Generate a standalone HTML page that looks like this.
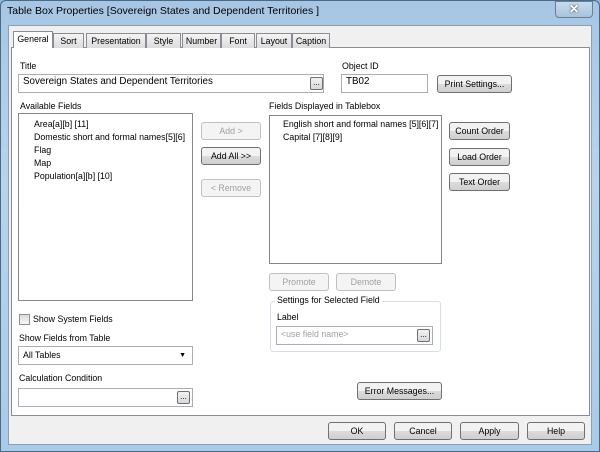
<!DOCTYPE html>
<html><head><style>
*{box-sizing:border-box}
body{margin:0;width:600px;height:452px;overflow:hidden;background:#8fb6d9;font-family:"Liberation Sans",sans-serif;font-size:8.8px;color:#000;position:relative}
.a{position:absolute;white-space:nowrap}
.frame{position:absolute;left:0;top:0;width:600px;height:452px;background:linear-gradient(#a7c6e4,#b9d3ec 40%,#a9cbe6);border:1px solid #4a6a8a;border-radius:6px 6px 0 0}
.body{position:absolute;left:8px;top:25px;width:584px;height:420px;background:#f0f0f0;border:1px solid #8aa0b8}
.panel{position:absolute;left:11px;top:47px;width:579px;height:369px;background:#fff;border:1px solid #898c95}
.tab{position:absolute;top:33px;height:15px;background:linear-gradient(#f4f4f4,#dcdcdc);border:1px solid #898c95;border-bottom:none;padding:2px 0 0;text-align:center;font-size:8.8px}
.inp{position:absolute;background:#fff;border:1px solid #abadb3;height:19px;padding:2px 4px}
.btn{position:absolute;height:18px;border:1px solid #707070;border-radius:3px;background:linear-gradient(#f2f2f2 50%,#dcdcdc 50%,#cfcfcf);text-align:center;line-height:16px;font-size:8.8px}
.dis{border-color:#c0c0c0;color:#a0a0a0;background:#f4f4f4}
.dots{position:absolute;width:13px;height:13px;border:1px solid #707070;border-radius:2px;background:linear-gradient(#f2f2f2,#d8d8d8);font-size:8px;text-align:center;line-height:9px}
.list{position:absolute;background:#fff;border:1px solid #828790}
</style></head><body>
<div class="frame"></div>
<div class="a" style="left:7px;top:5px;font-size:10.5px;color:#000">Table Box Properties [Sovereign States and Dependent Territories ]</div>
<div class="a" style="left:555px;top:1px;width:38px;height:17px;border:1px solid #6a7f95;border-radius:0 0 4px 4px;background:linear-gradient(#c9dcee,#a8c2dc);color:#fff;text-align:center;font-size:12px;font-weight:bold;line-height:15px;text-shadow:0 0 2px #333">✕</div>
<div class="body"></div>
<div class="panel"></div>
<div class="tab" style="left:13px;top:31px;height:17px;background:#fff;z-index:2;width:40px">General</div>
<div class="tab" style="left:53px;width:31px">Sort</div>
<div class="tab" style="left:86px;width:60px">Presentation</div>
<div class="tab" style="left:146px;width:35px">Style</div>
<div class="tab" style="left:182px;width:39px">Number</div>
<div class="tab" style="left:221px;width:34px">Font</div>
<div class="tab" style="left:256px;width:36px">Layout</div>
<div class="tab" style="left:292px;width:38px">Caption</div>

<div class="a" style="left:20px;top:61px">Title</div>
<div class="inp" style="left:18px;top:74px;width:306px;font-size:9.8px;padding-top:1px">Sovereign States and Dependent Territories</div>
<div class="dots" style="left:310px;top:77px">...</div>
<div class="a" style="left:342px;top:61px">Object ID</div>
<div class="inp" style="left:341px;top:74px;width:87px;font-size:9.8px;padding-top:1px">TB02</div>
<div class="btn" style="left:437px;top:75px;width:75px">Print Settings...</div>

<div class="a" style="left:20px;top:101px">Available Fields</div>
<div class="list" style="left:18px;top:113px;width:175px;height:188px"></div>
<div class="a" style="left:34px;top:118px;line-height:13px">Area[a][b] [11]<br>Domestic short and formal names[5][6]<br>Flag<br>Map<br>Population[a][b] [10]</div>

<div class="btn dis" style="left:201px;top:122px;width:60px">Add &gt;</div>
<div class="btn" style="left:201px;top:147px;width:60px">Add All &gt;&gt;</div>
<div class="btn dis" style="left:201px;top:179px;width:60px">&lt; Remove</div>

<div class="a" style="left:269px;top:101px">Fields Displayed in Tablebox</div>
<div class="list" style="left:269px;top:115px;width:173px;height:149px"></div>
<div class="a" style="left:283px;top:118px;line-height:13px">English short and formal names [5][6][7]<br>Capital [7][8][9]</div>

<div class="btn" style="left:449px;top:122px;width:61px">Count Order</div>
<div class="btn" style="left:449px;top:148px;width:61px">Load Order</div>
<div class="btn" style="left:449px;top:173px;width:61px">Text Order</div>

<div class="btn dis" style="left:269px;top:273px;width:60px">Promote</div>
<div class="btn dis" style="left:336px;top:273px;width:60px">Demote</div>

<div class="a" style="left:270px;top:301px;width:171px;height:51px;border:1px solid #d5dfe5;border-radius:3px"></div>
<div class="a" style="left:275px;top:295px;background:#fff;padding:0 2px">Settings for Selected Field</div>
<div class="a" style="left:277px;top:312px">Label</div>
<div class="inp" style="left:276px;top:326px;width:157px;color:#a0a0a0;padding-top:2px">&lt;use field name&gt;</div>
<div class="dots" style="left:417px;top:329px">...</div>

<div class="a" style="left:19px;top:314px;width:11px;height:11px;border:1px solid #8e8f8f;background:linear-gradient(#dcdcdc,#f6f6f6)"></div>
<div class="a" style="left:33px;top:314px">Show System Fields</div>
<div class="a" style="left:19px;top:333px">Show Fields from Table</div>
<div class="inp" style="left:18px;top:346px;width:175px;padding-top:3px">All Tables<span style="position:absolute;right:6px;top:5px;font-size:7px">▼</span></div>
<div class="a" style="left:19px;top:373px">Calculation Condition</div>
<div class="inp" style="left:18px;top:388px;width:175px"></div>
<div class="dots" style="left:177px;top:391px">...</div>

<div class="btn" style="left:357px;top:382px;width:85px">Error Messages...</div>

<div class="btn" style="left:328px;top:422px;width:58px">OK</div>
<div class="btn" style="left:394px;top:422px;width:58px">Cancel</div>
<div class="btn" style="left:460px;top:422px;width:59px">Apply</div>
<div class="btn" style="left:527px;top:422px;width:58px">Help</div>
</body></html>
